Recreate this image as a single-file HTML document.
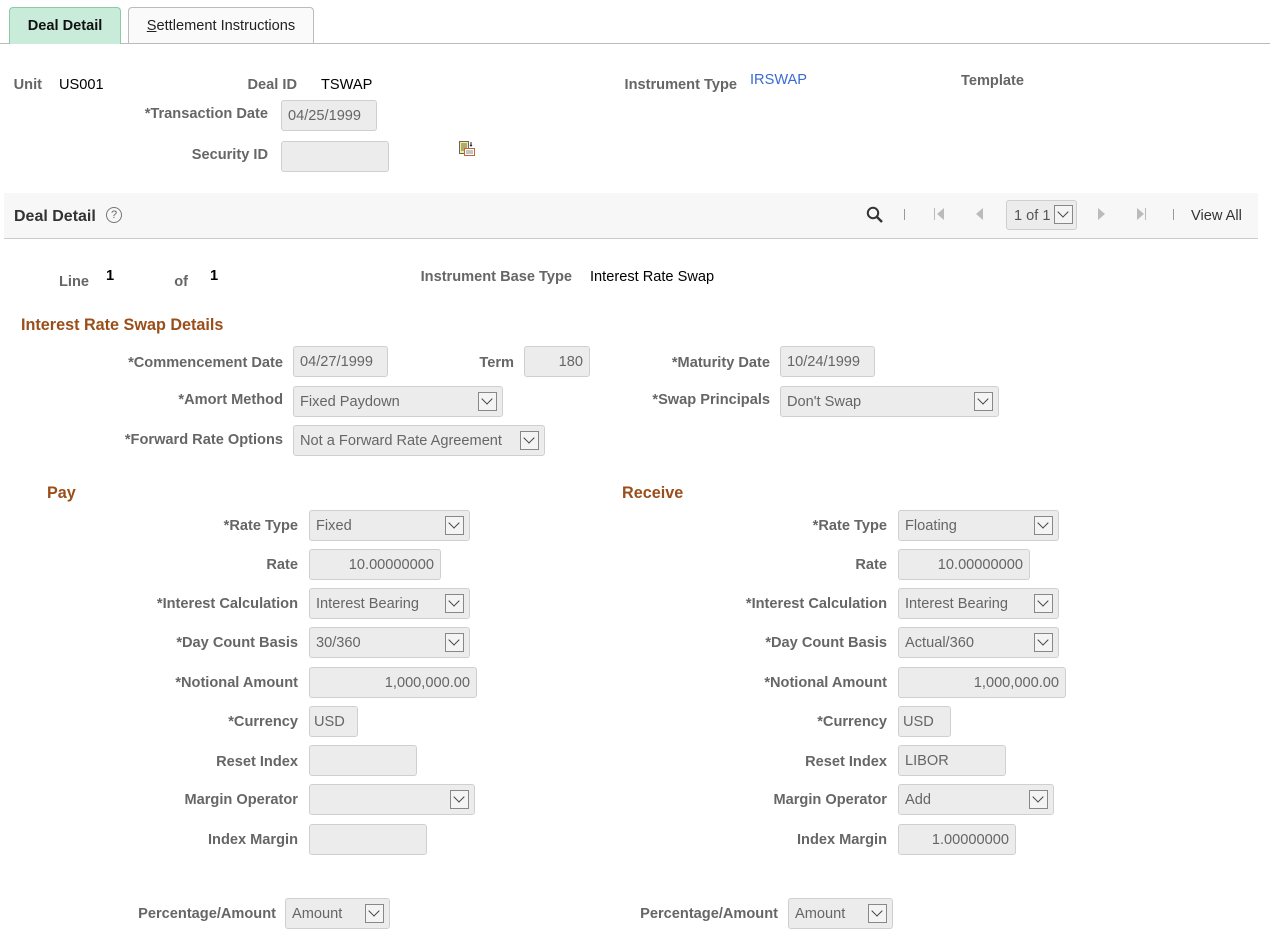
<!DOCTYPE html>
<html><head><meta charset="utf-8"><style>
body{margin:0;width:1270px;height:938px;background:#fff;font-family:"Liberation Sans",Arial,sans-serif;position:relative;overflow:hidden}
.a{position:absolute}
.l{position:absolute;left:0;text-align:right;font-weight:bold;color:#666;font-size:14.6px;line-height:18px;white-space:nowrap;margin-top:1px}
.v{position:absolute;font-size:14.6px;line-height:18px;color:#000;white-space:nowrap;margin-top:1px}
.i{position:absolute;background:#ececec;border:1px solid #cfcfcf;border-radius:3px;box-sizing:border-box;font-size:14.6px;color:#666;padding:0 6px;white-space:nowrap;line-height:30px!important}
.s .ar{position:absolute;right:5px;top:50%;margin-top:-10px;width:19px;height:19px;border:1px solid #888;box-sizing:border-box;background:#f4f4f4}
.s .ar:after{content:"";position:absolute;left:4px;top:2px;width:7px;height:7px;border-right:1.5px solid #444;border-bottom:1.5px solid #444;transform:rotate(45deg)}
.h{position:absolute;color:#9a4e1a;font-weight:bold;font-size:16.2px;line-height:18px;margin-top:1px}
</style></head><body>
<div class="a" style="left:0;top:43px;width:1270px;height:1px;background:#bbb"></div>
<div class="a" style="left:9px;top:7px;width:112px;height:37px;box-sizing:border-box;background:#c9ebd9;border:1px solid #8ccaa8;border-bottom:none;border-radius:4px 4px 0 0;text-align:center;font-weight:bold;font-size:14.6px;line-height:37px;color:#111">Deal Detail</div>
<div class="a" style="left:128px;top:7px;width:186px;height:36px;box-sizing:border-box;background:#fafafa;border:1px solid #bbb;border-bottom:none;border-radius:4px 4px 0 0;text-align:center;font-size:14.6px;line-height:37px;color:#222"><u>S</u>ettlement Instructions</div>

<div class="l" style="top:75px;width:42px">Unit</div>
<div class="v" style="left:59px;top:75px">US001</div>
<div class="l" style="top:75px;width:297px">Deal ID</div>
<div class="v" style="left:321px;top:75px">TSWAP</div>
<div class="l" style="top:75px;width:737px">Instrument Type</div>
<div class="v" style="left:750px;top:70px;color:#3a6bd0">IRSWAP</div>
<div class="l" style="top:71px;width:1024px">Template</div>
<div class="l" style="top:104px;width:268px">*Transaction Date</div>
<div class="i" style="left:281px;top:100px;width:96px;height:31px">04/25/1999</div>
<div class="l" style="top:145px;width:268px">Security ID</div>
<div class="i" style="left:281px;top:141px;width:108px;height:31px"></div>
<svg class="a" style="left:459px;top:141px" width="17" height="15" viewBox="0 0 17 15"><rect x="0.5" y="0.5" width="9" height="12" fill="#f6f08a" stroke="#666"/><path d="M2 3h6M2 5h6M2 7h6M2 9h6" stroke="#666"/><path d="M12 1v4M11 4l1 1 1-1" stroke="#222"/><rect x="5.5" y="7.5" width="10" height="7" fill="#fff" stroke="#c0643a"/><path d="M7 10h7M7 12h7" stroke="#888"/></svg>

<div class="a" style="left:4px;top:193px;width:1254px;height:45px;background:#f7f7f7;border-bottom:1px solid #ccc"></div>
<div class="v" style="left:14px;top:207px;font-weight:bold;color:#333;font-size:16px">Deal Detail</div>
<div class="a" style="left:106px;top:207px;width:14px;height:14px;border:1px solid #777;border-radius:50%;font-size:11px;line-height:14px;text-align:center;color:#666">?</div>
<svg class="a" style="left:866px;top:206px" width="18" height="18" viewBox="0 0 18 18"><circle cx="7" cy="7" r="5.2" fill="none" stroke="#333" stroke-width="2"/><path d="M11 11l5 5" stroke="#333" stroke-width="2.4"/></svg>
<div class="a" style="left:904px;top:209px;width:1px;height:11px;background:#999"></div>
<div class="a" style="left:934px;top:208px;width:1px;height:12px;background:#bbb"></div>
<div class="a" style="left:937px;top:208px;width:0;height:0;border-top:6px solid transparent;border-bottom:6px solid transparent;border-right:7px solid #bbb"></div>
<div class="a" style="left:976px;top:208px;width:0;height:0;border-top:6px solid transparent;border-bottom:6px solid transparent;border-right:7px solid #bbb"></div>
<div class="i s" style="left:1006px;top:200px;width:71px;height:30px;color:#555;padding-left:7px">1 of 1<span class="ar" style="right:3px"></span></div>
<div class="a" style="left:1098px;top:208px;width:0;height:0;border-top:6px solid transparent;border-bottom:6px solid transparent;border-left:7px solid #bbb"></div>
<div class="a" style="left:1137px;top:208px;width:0;height:0;border-top:6px solid transparent;border-bottom:6px solid transparent;border-left:7px solid #bbb"></div>
<div class="a" style="left:1145px;top:208px;width:1px;height:12px;background:#bbb"></div>
<div class="a" style="left:1173px;top:209px;width:1px;height:11px;background:#999"></div>
<div class="v" style="left:1191px;top:206px;color:#333">View All</div>

<div class="l" style="top:272px;width:89px">Line</div>
<div class="v" style="left:106px;top:266px;font-weight:bold">1</div>
<div class="l" style="top:272px;width:188px">of</div>
<div class="v" style="left:210px;top:266px;font-weight:bold">1</div>
<div class="l" style="top:267px;width:572px">Instrument Base Type</div>
<div class="v" style="left:590px;top:267px">Interest Rate Swap</div>

<div class="h" style="left:21px;top:315px">Interest Rate Swap Details</div>
<div class="l" style="top:353px;width:283px">*Commencement Date</div>
<div class="i" style="left:293px;top:346px;width:95px;height:31px">04/27/1999</div>
<div class="l" style="top:353px;width:514px">Term</div>
<div class="i" style="left:524px;top:346px;width:66px;height:31px;text-align:right">180</div>
<div class="l" style="top:353px;width:770px">*Maturity Date</div>
<div class="i" style="left:780px;top:346px;width:95px;height:31px">10/24/1999</div>
<div class="l" style="top:390px;width:283px">*Amort Method</div>
<div class="i s" style="left:293px;top:386px;width:210px;height:31px">Fixed Paydown<span class="ar"></span></div>
<div class="l" style="top:390px;width:770px">*Swap Principals</div>
<div class="i s" style="left:780px;top:386px;width:219px;height:31px">Don't Swap<span class="ar"></span></div>
<div class="l" style="top:430px;width:283px">*Forward Rate Options</div>
<div class="i s" style="left:293px;top:425px;width:252px;height:31px">Not a Forward Rate Agreement<span class="ar"></span></div>

<div class="h" style="left:47px;top:483px">Pay</div>
<div class="h" style="left:622px;top:483px">Receive</div>

<div class="l" style="top:516px;width:298px">*Rate Type</div>
<div class="i s" style="left:309px;top:510px;width:161px;height:31px">Fixed<span class="ar"></span></div>
<div class="l" style="top:555px;width:298px">Rate</div>
<div class="i" style="left:309px;top:549px;width:132px;height:31px;text-align:right">10.00000000</div>
<div class="l" style="top:594px;width:298px">*Interest Calculation</div>
<div class="i s" style="left:309px;top:588px;width:161px;height:31px">Interest Bearing<span class="ar"></span></div>
<div class="l" style="top:633px;width:298px">*Day Count Basis</div>
<div class="i s" style="left:309px;top:627px;width:161px;height:31px">30/360<span class="ar"></span></div>
<div class="l" style="top:673px;width:298px">*Notional Amount</div>
<div class="i" style="left:309px;top:667px;width:168px;height:31px;text-align:right">1,000,000.00</div>
<div class="l" style="top:712px;width:298px">*Currency</div>
<div class="i" style="left:309px;top:706px;width:49px;height:31px;padding:0 4px">USD</div>
<div class="l" style="top:752px;width:298px">Reset Index</div>
<div class="i" style="left:309px;top:745px;width:108px;height:31px"></div>
<div class="l" style="top:790px;width:298px">Margin Operator</div>
<div class="i s" style="left:309px;top:784px;width:166px;height:31px"><span class="ar"></span></div>
<div class="l" style="top:830px;width:298px">Index Margin</div>
<div class="i" style="left:309px;top:824px;width:118px;height:31px"></div>

<div class="l" style="top:516px;width:887px">*Rate Type</div>
<div class="i s" style="left:898px;top:510px;width:161px;height:31px">Floating<span class="ar"></span></div>
<div class="l" style="top:555px;width:887px">Rate</div>
<div class="i" style="left:898px;top:549px;width:132px;height:31px;text-align:right">10.00000000</div>
<div class="l" style="top:594px;width:887px">*Interest Calculation</div>
<div class="i s" style="left:898px;top:588px;width:161px;height:31px">Interest Bearing<span class="ar"></span></div>
<div class="l" style="top:633px;width:887px">*Day Count Basis</div>
<div class="i s" style="left:898px;top:627px;width:161px;height:31px">Actual/360<span class="ar"></span></div>
<div class="l" style="top:673px;width:887px">*Notional Amount</div>
<div class="i" style="left:898px;top:667px;width:168px;height:31px;text-align:right">1,000,000.00</div>
<div class="l" style="top:712px;width:887px">*Currency</div>
<div class="i" style="left:898px;top:706px;width:53px;height:31px;padding:0 4px">USD</div>
<div class="l" style="top:752px;width:887px">Reset Index</div>
<div class="i" style="left:898px;top:745px;width:108px;height:31px">LIBOR</div>
<div class="l" style="top:790px;width:887px">Margin Operator</div>
<div class="i s" style="left:898px;top:784px;width:156px;height:31px">Add<span class="ar"></span></div>
<div class="l" style="top:830px;width:887px">Index Margin</div>
<div class="i" style="left:898px;top:824px;width:118px;height:31px;text-align:right">1.00000000</div>

<div class="l" style="top:904px;width:276px">Percentage/Amount</div>
<div class="i s" style="left:285px;top:898px;width:105px;height:31px">Amount<span class="ar"></span></div>
<div class="l" style="top:904px;width:778px">Percentage/Amount</div>
<div class="i s" style="left:788px;top:898px;width:105px;height:31px">Amount<span class="ar"></span></div>
</body></html>
